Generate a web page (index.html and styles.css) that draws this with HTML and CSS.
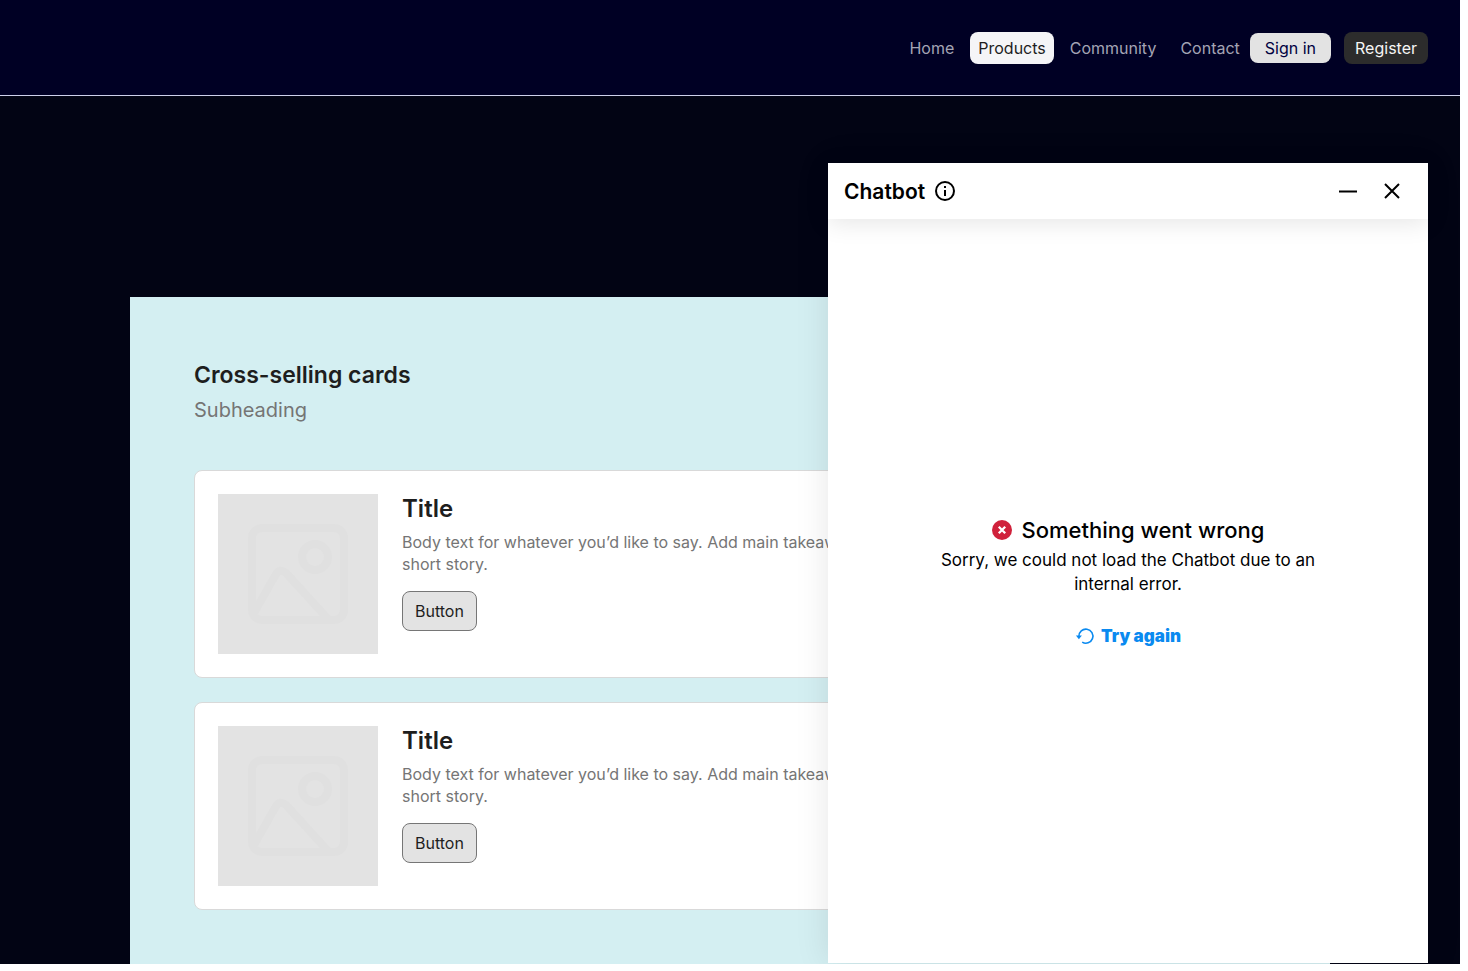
FILE: index.html
```html
<!DOCTYPE html>
<html lang="en">
<head>
  <meta charset="UTF-8" />
  <meta name="viewport" content="width=device-width, initial-scale=1" />
  <title>Products</title>
  <link rel="stylesheet" href="styles.css">
</head>
<body>

  <div class="page">
    <header class="site-header">
      <nav class="nav" aria-label="Main">
        <a href="#">Home</a>
        <a href="#" class="active" aria-current="page">Products</a>
        <a href="#">Community</a>
        <a href="#">Contact</a>
      </nav>
      <div class="auth">
        <button class="sign-in" type="button">Sign in</button>
        <button class="register" type="button">Register</button>
      </div>
    </header>

    <main class="content">
      <section class="panel">
        <h1>Cross-selling cards</h1>
        <p class="subheading">Subheading</p>

        <div class="cards">
          <article class="card">
            <svg class="card-image" viewBox="0 0 160 160" aria-hidden="true">
              <rect x="34" y="34" width="92" height="92" rx="10" />
              <circle cx="97" cy="63" r="13" />
              <path d="M36 119L58 80Q62 74 68 79L110 125" />
            </svg>
            <div class="card-body">
              <h2>Title</h2>
              <p>Body text for whatever you’d like to say. Add main takeaway points, quotes, anecdotes, or even a very very short story.</p>
              <button type="button">Button</button>
            </div>
          </article>

          <article class="card">
            <svg class="card-image" viewBox="0 0 160 160" aria-hidden="true">
              <rect x="34" y="34" width="92" height="92" rx="10" />
              <circle cx="97" cy="63" r="13" />
              <path d="M36 119L58 80Q62 74 68 79L110 125" />
            </svg>
            <div class="card-body">
              <h2>Title</h2>
              <p>Body text for whatever you’d like to say. Add main takeaway points, quotes, anecdotes, or even a very very short story.</p>
              <button type="button">Button</button>
            </div>
          </article>
        </div>
      </section>
    </main>

    <!-- Chatbot window -->
    <aside class="chatbot" aria-label="Chatbot">
      <div class="chatbot-header">
        <h2>Chatbot</h2>
        <button class="info-btn" type="button" aria-label="About the chatbot">
          <svg viewBox="0 0 24 24" width="24" height="24">
            <circle cx="12" cy="12" r="9" fill="none" stroke="currentColor" stroke-width="2" />
            <path d="M11 11h2v6h-2zM11 7h2v2h-2z" fill="currentColor" />
          </svg>
        </button>
        <div class="window-actions">
          <button type="button" aria-label="Minimize">
            <svg viewBox="0 0 24 24" width="24" height="24"><path d="M3 12.5h18" stroke="currentColor" stroke-width="2" /></svg>
          </button>
          <button type="button" aria-label="Close">
            <svg viewBox="0 0 24 24" width="24" height="24"><path d="M5 5l14 14M19 5L5 19" stroke="currentColor" stroke-width="2" /></svg>
          </button>
        </div>
      </div>

      <div class="chatbot-body" role="alert">
        <h3>
          <svg viewBox="0 0 20 20" width="20" height="20" aria-hidden="true">
            <circle cx="10" cy="10" r="10" fill="#d0213b" />
            <path d="M6.8 6.8l6.4 6.4M13.2 6.8l-6.4 6.4" stroke="#fff" stroke-width="2.3" />
          </svg>
          Something went wrong
        </h3>
        <p>Sorry, we could not load the Chatbot due to an internal error.</p>
        <button class="retry" type="button">
          <svg viewBox="0 0 20 20" width="20" height="20" aria-hidden="true">
            <path d="M3.9 10.4A7 7 0 1 1 7.2 16.1" fill="none" stroke="currentColor" stroke-width="1.6" />
            <path d="M.9 9.6h6L3.9 13.2z" fill="currentColor" />
          </svg>
          Try again
        </button>
      </div>
    </aside>
  </div>

</body>
</html>
```
FILE: styles.css
```css
* {
  box-sizing: border-box;
}

body {
  margin: 0 8px 7px 0;
  background: #fff;
  font-family: Inter, "Liberation Sans", sans-serif;
  font-size: 16px;
}

h1, h2, h3, p {
  margin: 0;
}

button {
  font: inherit;
  cursor: pointer;
}

svg {
  display: block;
}

.page {
  position: relative;
  display: flex;
  flex-direction: column;
  height: calc(100vh - 7px);
  overflow: hidden;
  background: #020414;
}

/* Header */
.site-header {
  display: flex;
  flex-shrink: 0;
  justify-content: flex-end;
  align-items: center;
  gap: 2px;
  height: 96px;
  padding: 0 32px;
  background: #000024;
  border-bottom: 1px solid #cdd0ea;
}

.nav {
  display: flex;
  gap: 8px;
}

.nav a {
  padding: 6px 8px;
  border-radius: 8px;
  color: #a4a4b4;
  line-height: 20px;
  text-decoration: none;
}

.nav a.active {
  background: #f5f5f7;
  color: #1e1e1e;
}

.auth {
  display: flex;
  align-items: center;
  gap: 13px;
}

.auth button {
  border: none;
  border-radius: 8px;
  line-height: 20px;
}

.auth .sign-in {
  padding: 5px 15px;
  background: #e3e3e3;
  color: #000040;
}

.auth .register {
  padding: 6px 11px;
  background: #2c2c2c;
  color: #f5f5f5;
}

/* Cards */
.content {
  display: flex;
  flex: 1;
  justify-content: center;
  min-height: 0;
  padding: 201px 32px 0;
}

.panel {
  width: 100%;
  max-width: 1200px;
  padding: 64px;
  background: #d4eff2;
}

.panel h1 {
  color: #1e1e1e;
  font-size: 23px;
  font-weight: 600;
  line-height: 29px;
}

.subheading {
  margin-top: 8px;
  color: #757575;
  font-size: 20px;
  line-height: 24px;
}

.cards {
  display: flex;
  flex-direction: column;
  gap: 24px;
  margin-top: 48px;
}

.card {
  display: flex;
  gap: 24px;
  padding: 23px;
  background: #fff;
  border: 1px solid #d9d9d9;
  border-radius: 8px;
}

.card-image {
  flex-shrink: 0;
  width: 160px;
  height: 160px;
  background: #e3e3e3;
  fill: none;
  stroke: #e0e0e0;
  stroke-width: 8px;
}

.card-body h2 {
  color: #1e1e1e;
  font-size: 24px;
  font-weight: 600;
  line-height: 29px;
}

.card-body p {
  margin: 8px 0 16px;
  color: #757575;
  line-height: 22px;
}

.card-body button {
  height: 40px;
  padding: 0 12px;
  background: #e3e3e3;
  border: 1px solid #767676;
  border-radius: 8px;
  color: #1e1e1e;
}

/* Chatbot */
.chatbot {
  position: absolute;
  right: 32px;
  bottom: 1px;
  display: flex;
  flex-direction: column;
  width: 600px;
  height: 800px;
  background: #fff;
  box-shadow: 0 0 32px rgba(0, 0, 0, 0.1);
  color: #000;
}

.chatbot-header {
  display: flex;
  align-items: center;
  gap: 8px;
  height: 56px;
  padding: 0 24px 0 16px;
  box-shadow: 0 4px 24px rgba(0, 0, 0, 0.1);
}

.chatbot-header h2 {
  font-size: 21px;
  font-weight: 600;
}

.chatbot button {
  padding: 0;
  background: none;
  border: none;
  color: inherit;
}

.window-actions {
  display: flex;
  gap: 20px;
  margin-left: auto;
}

.chatbot-body {
  display: flex;
  flex: 1;
  flex-direction: column;
  align-items: center;
  justify-content: center;
  padding-bottom: 18px;
  text-align: center;
}

.chatbot-body h3 {
  display: flex;
  align-items: center;
  gap: 10px;
  font-size: 22px;
  font-weight: 500;
  line-height: 28px;
}

.chatbot-body p {
  max-width: 400px;
  margin: 4px 0 28px;
  font-size: 17px;
  line-height: 24px;
}

.chatbot .retry {
  display: flex;
  align-items: center;
  gap: 6px;
  color: #0a8af0;
  font-size: 17px;
  font-weight: 900;
  line-height: 24px;
}
```
